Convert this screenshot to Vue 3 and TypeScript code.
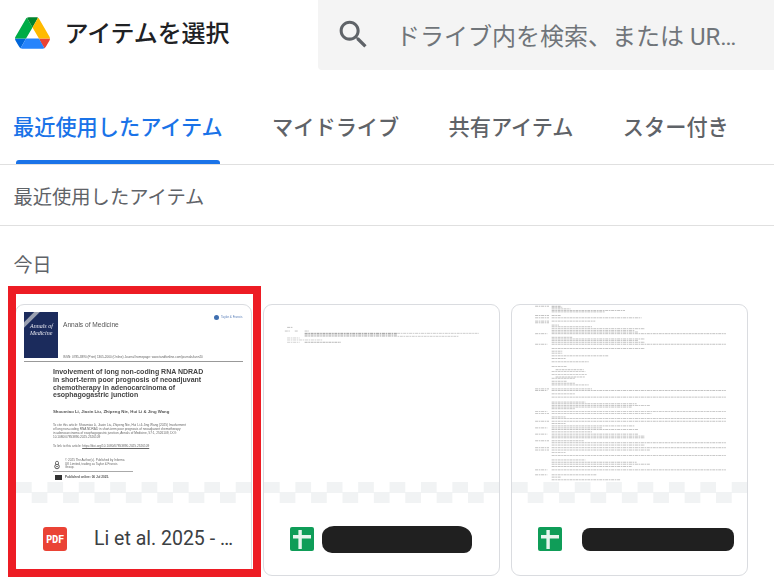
<script setup lang="ts">
type Seg = [number, number, number, number?]

const tabs = ['最近使用したアイテム', 'マイドライブ', '共有アイテム', 'スター付き']

const docLines: Seg[] = [
  [95, 92, 110], [106, 85, 100], [106, 115, 125], [106, 145, 158],
  [113, 145, 425, 1], [113, 425, 672, 0.5], [118, 145, 425, 0.85], [122, 145, 610, 0.5],
  [127, 92, 130, 0.45], [133, 92, 200, 0.45], [140, 92, 130, 0.45], [140, 145, 255, 0.75],
]

const ys: Seg[] = [
  [30, 88, 130], [30, 138, 165], [33, 138, 170], [38, 138, 195], [43, 138, 360], [47, 138, 300],
  [58, 88, 130], [58, 138, 165], [65, 88, 130], [65, 138, 410], [75, 88, 130], [75, 138, 270],
  [80, 88, 130], [87, 138, 160], [92, 138, 260], [98, 138, 420], [103, 138, 390], [108, 138, 400],
  [113, 88, 125], [113, 138, 665], [124, 138, 200], [129, 138, 420], [134, 138, 400], [139, 138, 420],
  [145, 88, 125], [145, 138, 665], [158, 138, 420], [166, 138, 170], [172, 138, 170], [180, 138, 310],
  [188, 138, 180], [198, 138, 250], [212, 138, 185], [222, 150, 235], [227, 138, 240], [236, 138, 245],
  [244, 150, 240], [248, 138, 210], [257, 138, 185], [263, 138, 210], [268, 138, 250], [280, 88, 130],
  [280, 138, 260], [285, 88, 125], [285, 138, 665], [295, 138, 210], [305, 138, 665], [320, 138, 240],
  [325, 138, 395], [330, 138, 435], [335, 138, 380], [340, 138, 210], [348, 88, 125], [348, 138, 665],
  [354, 88, 130], [354, 138, 440], [365, 138, 180], [370, 138, 665], [378, 88, 130], [378, 138, 665],
  [385, 138, 180], [392, 138, 390], [398, 88, 125], [398, 138, 290], [403, 138, 400], [410, 138, 260],
  [417, 88, 125], [417, 138, 400], [423, 138, 420], [428, 138, 420], [437, 88, 130], [437, 138, 235],
  [443, 138, 665], [450, 138, 420], [458, 88, 130], [458, 138, 665], [465, 88, 130], [465, 138, 435],
  [472, 138, 180], [482, 138, 665], [495, 138, 240], [502, 138, 395], [508, 138, 435], [515, 138, 380],
  [525, 88, 125], [525, 138, 665], [540, 88, 125], [540, 138, 275], [547, 138, 165], [555, 138, 345],
]
</script>

<template>
  <div class="page">
    <header class="top">
      <svg class="logo" viewBox="0 0 87.3 78" aria-hidden="true">
        <path d="m6.6 66.85 3.85 6.65c.8 1.4 1.95 2.5 3.3 3.3l13.75-23.8h-27.5c0 1.55.4 3.1 1.2 4.5z" fill="#0066da" />
        <path d="m43.65 25-13.75-23.8c-1.35.8-2.5 1.9-3.3 3.3l-25.4 44a9.06 9.06 0 0 0 -1.2 4.5h27.5z" fill="#00ac47" />
        <path d="m73.55 76.8c1.35-.8 2.5-1.9 3.3-3.3l1.6-2.75 7.65-13.25c.8-1.4 1.2-2.95 1.2-4.5h-27.502l5.852 11.5z" fill="#ea4335" />
        <path d="m43.65 25 13.75-23.8c-1.35-.8-2.9-1.2-4.5-1.2h-18.5c-1.6 0-3.15.45-4.5 1.2z" fill="#00832d" />
        <path d="m59.8 53h-32.3l-13.75 23.8c1.35.8 2.9 1.2 4.5 1.2h50.8c1.6 0 3.15-.45 4.5-1.2z" fill="#2684fc" />
        <path d="m73.4 26.5-12.7-22c-.8-1.4-1.95-2.5-3.3-3.3l-13.75 23.8 16.15 28h27.45c0-1.55-.4-3.1-1.2-4.5z" fill="#ffba00" />
      </svg>
      <h1 class="title">アイテムを選択</h1>
      <div class="search">
        <svg class="search-icon" viewBox="0 0 24 24" aria-hidden="true">
          <path fill="#5f6368" d="M15.5 14h-.79l-.28-.27C15.41 12.59 16 11.11 16 9.5 16 5.91 13.09 3 9.5 3S3 5.91 3 9.5 5.91 16 9.5 16c1.61 0 3.09-.59 4.23-1.57l.27.28v.79l5 4.99L20.49 19l-4.99-5zm-6 0C7.01 14 5 11.99 5 9.5S7.01 5 9.5 5 14 7.01 14 9.5 11.99 14 9.5 14z" />
        </svg>
        <div class="placeholder">ドライブ内を検索、または URL を貼り付け</div>
      </div>
    </header>

    <nav class="tabs">
      <div v-for="(t, i) in tabs" :key="t" class="tab" :class="{ active: i === 0 }">{{ t }}</div>
    </nav>

    <div class="crumb">最近使用したアイテム</div>
    <div class="section">今日</div>

    <div class="grid">
      <article class="card">
        <div class="thumb">
          <div class="paper">
            <div class="paper-head">
              <div class="cover">
                <span class="ribbon"></span>
                <span class="cover-name">Annals of<br />Medicine</span>
              </div>
              <div class="journal">
                <div class="journal-row">
                  <span class="journal-name">Annals of Medicine</span>
                  <span class="publisher"><i class="globe"></i>Taylor &amp; Francis</span>
                </div>
                <div class="issn">ISSN: 0785-3890 (Print) 1365-2060 (Online) Journal homepage: www.tandfonline.com/journals/iann20</div>
              </div>
            </div>
            <div class="paper-body">
              <div class="paper-title">Involvement of long non-coding RNA NDRAD<br />in short-term poor prognosis of neoadjuvant<br />chemotherapy in adenocarcinoma of<br />esophagogastric junction</div>
              <div class="authors">Shoumiao Li, Jiaxin Liu, Zhipeng Nie, Hui Li &amp; Jing Wang</div>
              <div class="cite">To cite this article: Shoumiao Li, Jiaxin Liu, Zhipeng Nie, Hui Li &amp; Jing Wang (2025) Involvement<br />of long non-coding RNA NDRAD in short-term poor prognosis of neoadjuvant chemotherapy<br />in adenocarcinoma of esophagogastric junction, Annals of Medicine, 57:1, 2526109, DOI:<br />10.1080/07853890.2025.2526109</div>
              <div class="cite link">To link to this article: <u>https://doi.org/10.1080/07853890.2025.2526109</u></div>
              <div class="open">
                <svg class="lock" viewBox="0 0 8 12" aria-hidden="true">
                  <path d="M2 5V3a2 2 0 0 1 4 0v2" fill="none" stroke="#444" stroke-width="1" />
                  <circle cx="4" cy="8" r="3" fill="none" stroke="#444" stroke-width="1.2" />
                  <circle cx="4" cy="8" r="1" fill="#444" />
                </svg>
                <span>© 2025 The Author(s). Published by Informa<br />UK Limited, trading as Taylor &amp; Francis<br />Group.</span>
              </div>
              <div class="pub"><i class="cal"></i>Published online: 06 Jul 2025.</div>
            </div>
          </div>
          <div class="checker"></div>
        </div>
        <footer class="foot">
          <span class="pdf">PDF</span>
          <span class="name">Li et al. 2025 - Involvement of long non-coding</span>
        </footer>
      </article>

      <article class="card">
        <div class="thumb">
          <svg class="doc" viewBox="22 28 711 534" aria-hidden="true">
            <line v-for="(s, i) in docLines" :key="i" :x1="s[1]" :x2="s[2]" :y1="s[0]" :y2="s[0]" :opacity="s[3] ?? 0.6" stroke="#777" stroke-width="2.2" stroke-dasharray="9 2 5 2" />
          </svg>
          <div class="checker"></div>
        </div>
        <footer class="foot">
          <svg class="sheet" viewBox="0 0 24 24" aria-hidden="true">
            <rect width="24" height="24" rx="2" fill="#0f9d58" />
            <path d="M3 8h18v3.4H3zM8.4 3h3.4v19H8.4z" fill="#e8f5ee" />
          </svg>
          <span class="mask mask-a"></span>
        </footer>
      </article>

      <article class="card">
        <div class="thumb">
          <svg class="doc" viewBox="18 27 711 534" aria-hidden="true">
            <line v-for="(s, i) in ys" :key="i" :x1="s[1]" :x2="s[2]" :y1="s[0]" :y2="s[0]" stroke="#666" stroke-width="1.9" stroke-dasharray="9 2 5 2" opacity="0.65" />
          </svg>
          <div class="checker"></div>
        </div>
        <footer class="foot">
          <svg class="sheet" viewBox="0 0 24 24" aria-hidden="true">
            <rect width="24" height="24" rx="2" fill="#0f9d58" />
            <path d="M3 8h18v3.4H3zM8.4 3h3.4v19H8.4z" fill="#e8f5ee" />
          </svg>
          <span class="mask mask-b"></span>
        </footer>
      </article>
    </div>

    <div class="highlight"></div>
  </div>
</template>

<style>
html, body { margin: 0; background: #fff; }
</style>

<style scoped>
.page {
  position: relative;
  width: 774px;
  height: 585px;
  overflow: hidden;
  background: #fff;
  font-family: "Noto Sans", "Noto Sans CJK JP", sans-serif;
}
.top { display: flex; align-items: flex-start; height: 70px; }
.logo { width: 35px; height: 32px; margin: 17px 0 0 15px; flex: none; }
.title {
  margin: 13px 0 0 14.5px;
  font-size: 24px;
  line-height: 40px;
  font-weight: 500;
  color: #202124;
  letter-spacing: -0.1px;
}
.search {
  margin-left: auto;
  width: 456px;
  height: 70px;
  box-sizing: border-box;
  background: #f4f4f4;
  border-bottom-left-radius: 4px;
  display: flex;
  align-items: center;
  padding-left: 17px;
}
.search-icon { width: 37px; height: 37px; flex: none; margin-top: -2px; }
.placeholder {
  margin-left: 24px;
  width: 347px;
  font-family: Roboto, "Noto Sans CJK JP", sans-serif;
  font-size: 24px;
  line-height: 36px;
  color: #70757a;
  white-space: nowrap;
  overflow: hidden;
  text-overflow: ellipsis;
  margin-top: 3px;
}
.tabs {
  display: flex;
  gap: 49.3px;
  height: 95px;
  box-sizing: border-box;
  padding-left: 13px;
  border-bottom: 1px solid #e0e0e0;
}
.tab {
  position: relative;
  font-size: 21.2px;
  font-weight: 500;
  line-height: 30px;
  padding-top: 42px;
  color: #5f6368;
}
.tab.active { color: #1a73e8; }
.tab.active::after {
  content: "";
  position: absolute;
  left: 3px;
  right: 3px;
  top: 90px;
  height: 4px;
  background: #1a73e8;
  border-radius: 3px 3px 0 0;
}
.crumb {
  height: 61px;
  box-sizing: border-box;
  padding: 18px 0 0 13.5px;
  border-bottom: 1px solid #e0e0e0;
  font-size: 19.3px;
  line-height: 28px;
  color: #5f6368;
}
.section {
  padding: 25px 0 0 13.5px;
  font-size: 19px;
  line-height: 28px;
  color: #5f6368;
}
.grid {
  display: grid;
  grid-template-columns: repeat(3, 236.5px);
  gap: 11.5px;
  padding: 25px 0 0 15px;
}
.card {
  height: 272px;
  box-sizing: border-box;
  border: 1px solid #dadce0;
  border-radius: 9px;
  overflow: hidden;
  display: flex;
  flex-direction: column;
}
.thumb {
  position: relative;
  height: 198px;
  flex: none;
  overflow: hidden;
}
.doc { display: block; width: 235px; height: 177px; filter: blur(0.35px); }
.checker {
  position: absolute;
  left: 0;
  right: 0;
  top: 177px;
  height: 21px;
  background: conic-gradient(#fff 25%, #f1f3f4 0 50%, #fff 0 75%, #f1f3f4 0) 0 0 / 31.4px 21px;
}
.paper {
  height: 177px;
  overflow: hidden;
  color: #333;
  font-family: "Liberation Sans", sans-serif;
  filter: blur(0.45px);
}
.paper-head {
  display: flex;
  gap: 5px;
  margin: 7px 8px 0 8px;
  height: 49px;
  border-bottom: 1px solid #999;
}
.cover {
  position: relative;
  width: 34px;
  height: 46px;
  background: #1b2b5c;
  overflow: hidden;
  flex: none;
  color: #e8e8f0;
}
.ribbon {
  position: absolute;
  left: -8px;
  top: 4px;
  width: 30px;
  height: 4px;
  background: #9aa0b0;
  transform: rotate(-45deg);
}
.cover-name {
  position: absolute;
  left: 6px;
  top: 11px;
  font: italic 6px/6.5px "Liberation Serif", serif;
}
.journal { flex: 1; display: flex; flex-direction: column; justify-content: space-between; }
.journal-row { display: flex; justify-content: space-between; margin-top: 2px; }
.journal-name { font-size: 6.6px; line-height: 10px; margin-top: 6px; color: #555; }
.publisher { display: flex; align-items: center; gap: 2px; font-size: 3px; line-height: 5px; color: #5a7fb8; height: 5px; margin-top: 1px; }
.globe { width: 5px; height: 5px; border-radius: 50%; background: #3f6fb0; }
.issn { font-size: 3.1px; line-height: 5px; margin-bottom: 1px; color: #666; white-space: nowrap; }
.paper-body { padding: 6px 0 0 37px; }
.paper-title { font-size: 7px; line-height: 7.8px; font-weight: 700; color: #444; white-space: nowrap; }
.authors { margin-top: 10px; font-size: 4.3px; line-height: 6px; color: #555; white-space: nowrap; font-weight: 700; }
.cite { font-size: 3.15px; line-height: 3.8px; color: #666; white-space: nowrap; margin-top: 9px; }
.cite.link { margin-top: 6px; }
.open {
  display: flex;
  align-items: center;
  gap: 5px;
  width: 80px;
  box-sizing: border-box;
  margin-top: 10px;
  padding: 0 0 1px 1px;
  border-bottom: 1px solid #aaa;
  font-size: 3.05px;
  line-height: 3.6px;
  color: #666;
  white-space: nowrap;
}
.lock { width: 6px; height: 10px; flex: none; }
.pub {
  display: flex;
  align-items: center;
  gap: 3px;
  margin: 3px 0 0 2px;
  font-size: 3.1px;
  line-height: 5px;
  font-weight: 700;
  color: #555;
}
.cal { width: 7px; height: 5px; background: #333; }
.foot {
  flex: 1;
  display: flex;
  align-items: center;
  padding: 0 0 0 27px;
}
.pdf {
  width: 24px;
  height: 24px;
  flex: none;
  border-radius: 3px;
  background: #ea4335;
  color: #fff;
  font: 700 10.5px/24px "DejaVu Sans Mono", "Liberation Mono", monospace;
  text-align: center;
  letter-spacing: -0.3px;
}
.name {
  margin-left: 27px;
  width: 139px;
  font: 400 19.5px/30px Roboto, sans-serif;
  color: #3c4043;
  white-space: nowrap;
  overflow: hidden;
  text-overflow: ellipsis;
}
.sheet { width: 24px; height: 24px; flex: none; margin-left: -1px; }
.mask { display: block; background: #202020; }
.mask-a { width: 150px; height: 27px; margin-left: 8px; border-radius: 12px 14px 8px 10px / 10px 12px 8px 10px; }
.mask-b { width: 152px; height: 23px; margin-left: 20px; border-radius: 8px; }
.highlight {
  position: absolute;
  left: 8px;
  top: 286px;
  width: 253px;
  height: 291px;
  box-sizing: border-box;
  border: 8px solid #ed1c24;
  pointer-events: none;
}
</style>
